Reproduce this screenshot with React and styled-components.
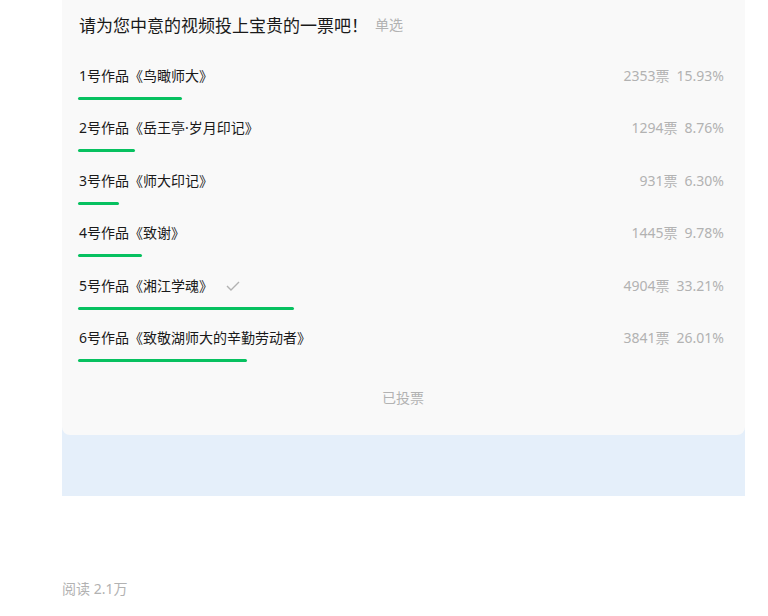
import React from 'react'
import styled, { createGlobalStyle } from 'styled-components'

const GlobalStyle = createGlobalStyle`
  body {
    margin: 0;
    background: #ffffff;
    font-family: "Noto Sans", "Noto Sans CJK SC", sans-serif;
  }
`

const Page = styled.div`
  padding-left: 62px;
  width: 683px;
`

const VoteBox = styled.section`
  background: #e5effa;
  padding-bottom: 61px;
`

const Card = styled.div`
  background: #f9f9f9;
  border-radius: 0 0 8px 8px;
  padding: 0 17px 0 16px;
`

const Header = styled.div`
  height: 48px;
  display: flex;
  align-items: center;
  padding-left: 1px;
`

const Title = styled.h2`
  margin: 0;
  font-size: 17px;
  font-weight: 400;
  color: #1a1a1a;
`

const Mode = styled.span`
  margin-left: 7px;
  font-size: 14px;
  color: #b2b2b2;
`

const Row = styled.div`
  height: 52.4px;
  padding-top: 18px;
  box-sizing: border-box;
`

const Line = styled.div`
  display: flex;
  align-items: center;
  height: 20px;
  line-height: 20px;
  font-size: 14px;
`

const Label = styled.span`
  color: #1a1a1a;
  padding-left: 1px;
`

const Check = styled.svg`
  margin-left: 13px;
  width: 14px;
  height: 10px;
`

const Meta = styled.span`
  margin-left: auto;
  padding-right: 4px;
  color: #b2b2b2;
`

const Percent = styled.span`
  margin-left: 7px;
`

const Bar = styled.div`
  margin-top: 11px;
  height: 3px;
  border-radius: 2px;
  background: #07c160;
`

const Footer = styled.div`
  padding: 26px 0 27px;
  text-align: center;
  font-size: 14px;
  line-height: 20px;
  color: #b2b2b2;
`

const Reads = styled.div`
  margin-top: 83px;
  font-size: 14px;
  line-height: 20px;
  color: #b2b2b2;
`

const options = [
  { name: '1号作品《鸟瞰师大》', votes: 2353, pct: '15.93' },
  { name: '2号作品《岳王亭·岁月印记》', votes: 1294, pct: '8.76' },
  { name: '3号作品《师大印记》', votes: 931, pct: '6.30' },
  { name: '4号作品《致谢》', votes: 1445, pct: '9.78' },
  { name: '5号作品《湘江学魂》', votes: 4904, pct: '33.21', picked: true },
  { name: '6号作品《致敬湖师大的辛勤劳动者》', votes: 3841, pct: '26.01' },
]

const App = () => {
  return <>
    <GlobalStyle />
    <Page>
      <VoteBox>
        <Card>
          <Header>
            <Title>请为您中意的视频投上宝贵的一票吧！</Title>
            <Mode>单选</Mode>
          </Header>
          {options.map(o => (
            <Row key={o.name}>
              <Line>
                <Label>{o.name}</Label>
                {o.picked && (
                  <Check viewBox="0 0 14 10">
                    <polyline points="1,5 5,9 13,1" fill="none" stroke="#b2b2b2" strokeWidth="1.4" />
                  </Check>
                )}
                <Meta>
                  {o.votes}票<Percent>{o.pct}%</Percent>
                </Meta>
              </Line>
              <Bar style={{ width: `${o.pct}%` }} />
            </Row>
          ))}
          <Footer>已投票</Footer>
        </Card>
      </VoteBox>
      <Reads>阅读 2.1万</Reads>
    </Page>
  </>
}

export default App
